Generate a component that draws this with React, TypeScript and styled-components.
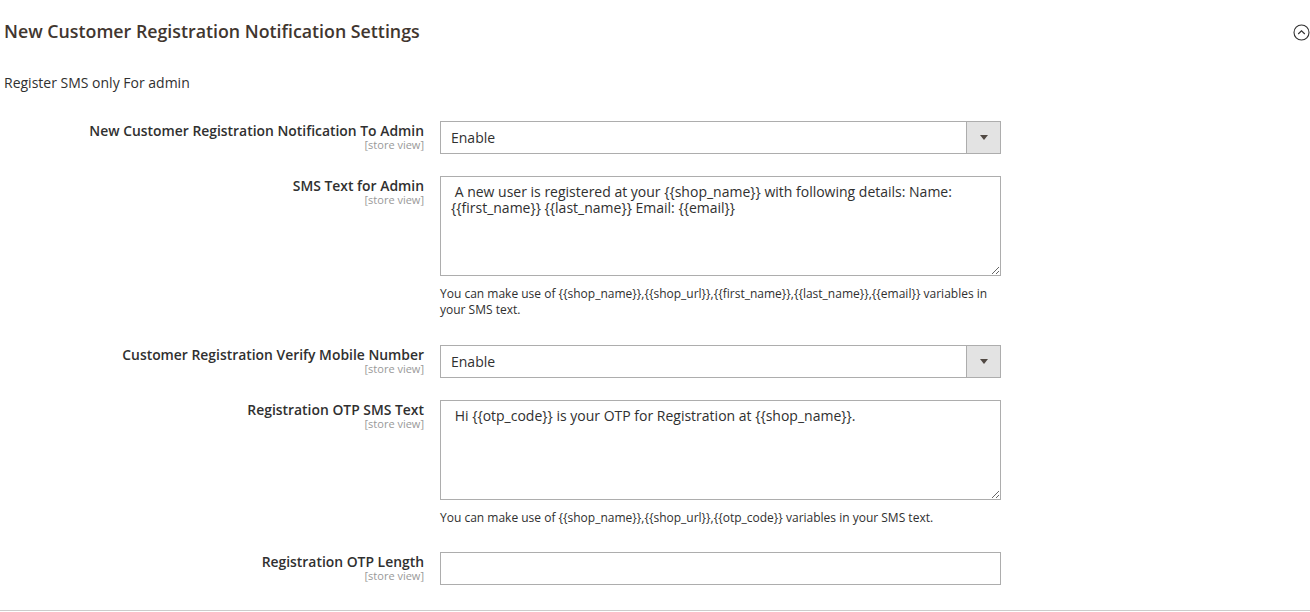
import styled, { createGlobalStyle } from 'styled-components'

const GlobalStyle = createGlobalStyle`
  html, body {
    margin: 0;
    padding: 0;
    background: #ffffff;
  }
  body {
    font-family: 'Open Sans', 'Liberation Sans', sans-serif;
    color: #303030;
  }
`

const Page = styled.div`
  width: 1310px;
  height: 612px;
  overflow: hidden;
  box-sizing: border-box;
  padding-left: 4px;
`

const SectionHeader = styled.div`
  display: flex;
  justify-content: space-between;
  align-items: center;
  padding-top: 20px;
  height: 22px;
`

const SectionTitle = styled.h2`
  margin: 0;
  font-size: 17.8px;
  line-height: 22px;
  font-weight: 600;
  color: #41362f;
`

const CollapseButton = styled.button`
  display: flex;
  align-items: center;
  justify-content: center;
  width: 18px;
  height: 18px;
  margin-top: 3px;
  padding: 0;
  border: none;
  background: none;
  cursor: pointer;
`

const Comment = styled.p`
  margin: 31px 0 0;
  font-size: 14px;
  line-height: 20px;
  color: #303030;
`

const Fieldset = styled.div`
  display: grid;
  grid-template-columns: 420px 561px;
  column-gap: 16px;
  margin-top: 28px;
  margin-left: -4px;
  padding-left: 4px;
  padding-bottom: 25px;
  border-bottom: 1px solid #cccccc;
  width: 1306px;
`

const LabelCell = styled.div<{ $gap: number }>`
  text-align: right;
  padding-top: 2px;
  padding-bottom: ${(p) => p.$gap}px;
`

const LabelText = styled.div`
  font-size: 13.9px;
  line-height: 15px;
  font-weight: 600;
  color: #303030;
`

const Scope = styled.div`
  margin-top: 2px;
  font-size: 11px;
  line-height: 10px;
  color: #999999;
`

const FieldCell = styled.div<{ $gap: number }>`
  padding-bottom: ${(p) => p.$gap}px;
`

const SelectBox = styled.div`
  display: flex;
  height: 33px;
  box-sizing: border-box;
  border: 1px solid #adadad;
  background: #ffffff;
`

const SelectValue = styled.div`
  flex: 1;
  padding-left: 10px;
  font-size: 14px;
  line-height: 31px;
  color: #303030;
`

const SelectArrow = styled.div`
  width: 33px;
  border-left: 1px solid #adadad;
  background: #e3e3e3;
  display: flex;
  align-items: center;
  justify-content: center;

  &::after {
    content: '';
    border-left: 4px solid transparent;
    border-right: 4px solid transparent;
    border-top: 5px solid #514943;
  }
`

const TextArea = styled.textarea`
  display: block;
  width: 561px;
  height: 100px;
  box-sizing: border-box;
  margin: 0;
  padding: 7px 10px;
  border: 1px solid #adadad;
  border-radius: 0;
  font-family: 'Open Sans', 'Liberation Sans', sans-serif;
  font-size: 14px;
  line-height: 16px;
  color: #303030;
  resize: vertical;
  outline: none;
`

const TextInput = styled.input`
  display: block;
  width: 561px;
  height: 33px;
  box-sizing: border-box;
  margin: 0;
  padding: 0 10px;
  border: 1px solid #adadad;
  border-radius: 0;
  font-family: 'Open Sans', 'Liberation Sans', sans-serif;
  font-size: 14px;
  color: #303030;
  outline: none;
`

const Note = styled.div`
  margin-top: 10px;
  font-size: 12px;
  line-height: 16px;
  color: #303030;
`

type Row = {
  label: string
  kind: 'select' | 'textarea' | 'input'
  value?: string
  note?: string
  gap: number
}

const rows: Row[] = [
  { label: 'New Customer Registration Notification To Admin', kind: 'select', value: 'Enable', gap: 22 },
  {
    label: 'SMS Text for Admin',
    kind: 'textarea',
    value:
      ' A new user is registered at your {{shop_name}} with following details: Name: {{first_name}} {{last_name}} Email: {{email}}',
    note: 'You can make use of {{shop_name}},{{shop_url}},{{first_name}},{{last_name}},{{email}} variables in your SMS text.',
    gap: 27,
  },
  { label: 'Customer Registration Verify Mobile Number', kind: 'select', value: 'Enable', gap: 22 },
  {
    label: 'Registration OTP SMS Text',
    kind: 'textarea',
    value: ' Hi {{otp_code}} is your OTP for Registration at {{shop_name}}.',
    note: 'You can make use of {{shop_name}},{{shop_url}},{{otp_code}} variables in your SMS text.',
    gap: 26,
  },
  { label: 'Registration OTP Length', kind: 'input', value: '', gap: 0 },
]

const renderField = (row: Row) => {
  if (row.kind === 'select') {
    return (
      <SelectBox>
        <SelectValue>{row.value}</SelectValue>
        <SelectArrow />
      </SelectBox>
    )
  }
  if (row.kind === 'textarea') {
    return <TextArea defaultValue={row.value} />
  }
  return <TextInput defaultValue={row.value} />
}

const App = () => {
  return (
    <Page>
      <GlobalStyle />
      <SectionHeader>
        <SectionTitle>New Customer Registration Notification Settings</SectionTitle>
        <CollapseButton aria-label="Collapse">
          <svg width="17" height="17" viewBox="0 0 17 17" fill="none">
            <circle cx="8.5" cy="8.5" r="7.5" stroke="#303030" strokeWidth="1.1" />
            <path d="M5.2 10 L8.5 6.8 L11.8 10" stroke="#303030" strokeWidth="1.1" />
          </svg>
        </CollapseButton>
      </SectionHeader>
      <Comment>Register SMS only For admin</Comment>
      <Fieldset>
        {rows.map((row, i) => [
          <LabelCell key={`l${i}`} $gap={row.gap}>
            <LabelText>{row.label}</LabelText>
            <Scope>[store view]</Scope>
          </LabelCell>,
          <FieldCell key={`f${i}`} $gap={row.gap}>
            {renderField(row)}
            {row.note && <Note>{row.note}</Note>}
          </FieldCell>,
        ])}
      </Fieldset>
    </Page>
  )
}

export default App
